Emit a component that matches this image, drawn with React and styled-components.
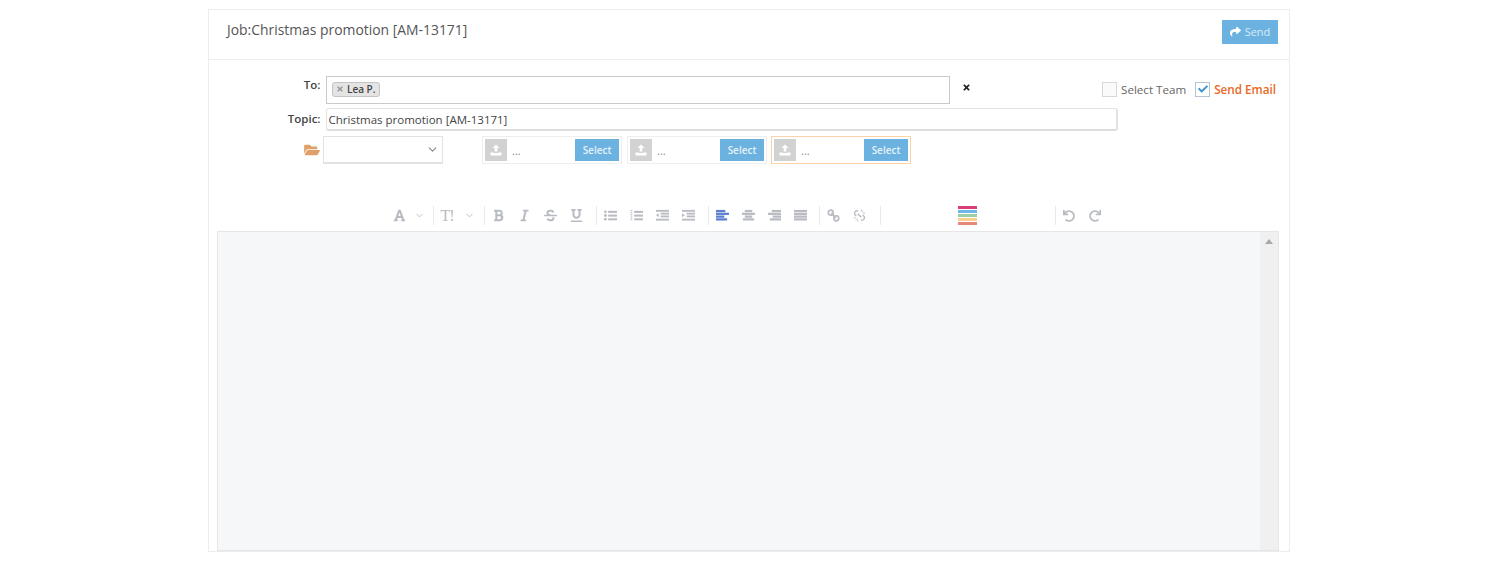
import React from "react";
import styled, { createGlobalStyle } from "styled-components";
import {
  FaFont,
  FaBold,
  FaItalic,
  FaStrikethrough,
  FaUnderline,
  FaUndo,
  FaRedo,
  FaFolderOpen,
  FaCheck,
  FaShare,
  FaTimes,
} from "react-icons/fa";
import { FiChevronDown } from "react-icons/fi";

const Global = createGlobalStyle`
  html, body {
    margin: 0;
    padding: 0;
    background: #fff;
    font-family: "Open Sans", "Liberation Sans", sans-serif;
    overflow: hidden;
  }
  * { box-sizing: border-box; }
`;

const Page = styled.div`
  height: 576px;
  padding: 9px 202px 24px 208px;
`;
const Panel = styled.div`
  height: 543px;
  border: 1px solid #ececec;
  display: flex;
  flex-direction: column;
  overflow: hidden;
`;
const Header = styled.div`
  height: 50px;
  flex: none;
  display: flex;
  justify-content: space-between;
  padding: 10px 11px 0 18px;
  border-bottom: 1px solid #efefef;
`;
const Title = styled.div`
  font-size: 13.9px;
  line-height: 20px;
  color: #555;
`;
const SendButton = styled.div`
  width: 56px;
  height: 24px;
  padding-bottom: 1px;
  background: #6cb2e0;
  color: #d8ebf7;
  font-size: 11px;
  display: flex;
  align-items: center;
  justify-content: center;
  gap: 4px;
  svg { color: #fff; width: 11px; height: 11px; }
`;
const Form = styled.div`
  padding: 16px 0 0;
  display: flex;
  flex-direction: column;
  flex: none;
`;
const Row = styled.div`
  display: flex;
  align-items: center;
  height: ${({ $h }) => $h}px;
  margin-bottom: ${({ $mb }) => $mb || 0}px;
`;
const Label = styled.div`
  width: 111.5px;
  text-align: right;
  font-size: 11.5px;
  font-weight: 600;
  color: #444;
  line-height: 18px;
  margin-right: 5px;
  align-self: flex-start;
  padding-top: ${({ $pt }) => $pt || 0}px;
`;
const ToInput = styled.div`
  width: 624px;
  height: 28px;
  border: 1px solid #c9c9c9;
  display: flex;
  align-items: center;
  padding-left: 5px;
`;
const Tag = styled.div`
  height: 15px;
  margin-top: -2px;
  padding: 0 3.5px;
  background: #e4e4e4;
  border: 1px solid #c4c4c4;
  border-radius: 3px;
  font-size: 10px;
  font-weight: 600;
  color: #444;
  display: flex;
  align-items: center;
  gap: 3px;
  svg { width: 8px; height: 8px; color: #999; }
`;
const ClearIcon = styled.div`
  margin-left: 12px;
  margin-top: -6px;
  display: flex;
  svg { width: 9px; height: 9px; color: #222; }
`;
const Options = styled.div`
  margin-left: auto;
  margin-right: 13px;
  margin-top: -2px;
  display: flex;
  align-items: center;
`;
const Box = styled.div`
  width: 15px;
  height: 15px;
  border: 1px solid ${({ $on }) => ($on ? "#b5c4d4" : "#d8d8d8")};
  background: ${({ $on }) => ($on ? "#fff" : "#fafafa")};
  margin-right: ${({ $on }) => ($on ? 4 : 4)}px;
  display: flex;
  align-items: center;
  justify-content: center;
  svg { width: 10px; height: 10px; color: #3d94d1; }
`;
const OptionText = styled.span`
  color: ${({ $on }) => ($on ? "#e8681f" : "#666")};
  font-weight: ${({ $on }) => ($on ? 600 : 400)};
  font-size: ${({ $on }) => ($on ? 11.7 : 11.6)}px;
  margin-right: ${({ $gap }) => $gap || 0}px;
`;
const TopicInput = styled.div`
  width: 792px;
  height: 23px;
  border: 1px solid #e2e2e2;
  border-bottom: 2px solid #ddd;
  border-right: 2px solid #e2e2e2;
  border-radius: 3px;
  font-size: 11.5px;
  line-height: 21px;
  padding-left: 2px;
  color: #444;
`;
const FolderIcon = styled.div`
  width: 114px;
  display: flex;
  justify-content: flex-end;
  padding-right: 3.5px;
  svg { width: 16px; height: 14px; color: #e0a06a; }
`;
const SelectBox = styled.div`
  width: 120px;
  height: 28px;
  border: 1px solid #e2e2e2;
  border-bottom: 2px solid #e2e2e2;
  display: flex;
  align-items: center;
  justify-content: flex-end;
  padding-right: 3px;
  margin-right: 39px;
  svg { width: 13px; height: 13px; color: #888; }
`;
const Upload = styled.div`
  width: 140px;
  height: 28px;
  border: 1px solid ${({ $active }) => ($active ? "#fbd3a8" : "#eee")};
  padding: 2px;
  margin-right: ${({ $mr }) => $mr || 0}px;
  display: flex;
  align-items: center;
`;
const UploadThumb = styled.div`
  width: 22px;
  height: 22px;
  background: #d2d2d2;
  display: flex;
  align-items: center;
  justify-content: center;
  svg { width: 12px; height: 12px; }
`;
const Dots = styled.div`
  flex: 1;
  font-size: 11px;
  color: #888;
  padding-left: 5px;
`;
const SelectButton = styled.div`
  width: 44px;
  height: 22px;
  background: #6cb2e0;
  color: #e4f1fa;
  font-size: 10px;
  font-weight: 600;
  display: flex;
  align-items: center;
  justify-content: center;
`;
const Toolbar = styled.div`
  margin-top: 41px;
  height: 21px;
  flex: none;
  display: flex;
  align-items: center;
  padding-left: 178px;
`;
const Tool = styled.div`
  width: ${({ $w }) => $w || 26}px;
  flex: none;
  display: flex;
  align-items: center;
  justify-content: center;
  color: ${({ $on }) => ($on ? "#5b7fd1" : "#b8bcc2")};
  svg { width: ${({ $s }) => $s || 13}px; height: ${({ $s }) => $s || 13}px; }
`;
const Sep = styled.div`
  width: 1px;
  height: 19px;
  background: #eaeaea;
  flex: none;
  margin: 0 ${({ $r }) => $r || 0}px 0 ${({ $l }) => $l || 0}px;
`;
const ColorStack = styled.div`
  width: 19px;
  height: 19px;
  flex: none;
  display: flex;
  flex-direction: column;
  justify-content: space-between;
  margin: 0 78px 0 77px;
`;
const ColorLine = styled.div`
  height: 3px;
  background: ${({ $c }) => $c};
`;
const TextSize = styled.span`
  font-family: "Liberation Serif", serif;
  font-size: 16px;
  line-height: 16px;
  letter-spacing: -1px;
  color: #b8bcc2;
`;
const Editor = styled.div`
  flex: 1;
  margin: 5px 10px 0 8px;
  background: #f6f7f9;
  border: 1px solid #e6e6e6;
  display: flex;
  justify-content: flex-end;
`;
const Scrollbar = styled.div`
  width: 18px;
  background: #f0f0f0;
  display: flex;
  justify-content: center;
  padding-top: 7px;
`;
const ScrollArrow = styled.div`
  width: 0;
  height: 0;
  border: 4px solid transparent;
  border-top: 0;
  border-bottom: 5px solid #a8a8a8;
`;

const UploadGlyph = () => (
  <svg viewBox="0 0 12 12">
    <path d="M6 .5 9.5 4H7.3v3.5H4.7V4H2.5z" fill="#fff" />
    <path d="M.5 8.5h3.2v.6h4.6v-.6h3.2v3H.5z" fill="#fff" />
  </svg>
);

// solid four bar align icons, the bars nearly touch in the reference
const barRows = {
  left: [[0, 10], [0, 14], [0, 9], [0, 12]],
  center: [[3, 8], [0, 14], [3, 8], [1, 12]],
  right: [[4, 10], [0, 14], [5, 9], [2, 12]],
  justify: [[0, 14], [0, 14], [0, 14], [0, 14]],
};
const AlignGlyph = ({ kind }) => (
  <svg viewBox="0 0 14 14" fill="currentColor">
    {barRows[kind].map(([x, w], i) => (
      <rect key={i} x={x} y={1 + i * 3} width={w} height="2.4" />
    ))}
  </svg>
);
const BulletGlyph = () => (
  <svg viewBox="0 0 14 14" fill="currentColor">
    {[2, 6, 10].map((y) => (
      <g key={y}>
        <circle cx="1.5" cy={y + 1} r="1.5" />
        <rect x="4.5" y={y} width="9.5" height="2.2" />
      </g>
    ))}
  </svg>
);
const NumberGlyph = () => (
  <svg viewBox="0 0 14 14" fill="currentColor">
    {[2, 6, 10].map((y) => (
      <g key={y}>
        <rect x="0.5" y={y - 1} width="2" height="1" />
        <rect x="0.5" y={y + 1} width="2" height="1" />
        <rect x="4.5" y={y} width="9.5" height="2.2" />
      </g>
    ))}
  </svg>
);
const IndentGlyph = ({ flip }) => (
  <svg viewBox="0 0 14 14" fill="currentColor">
    <rect x="0" y="1" width="14" height="2" />
    <rect x="5" y="4" width="9" height="2" />
    <rect x="5" y="7" width="9" height="2" />
    <rect x="0" y="10.5" width="14" height="2" />
    <path d={flip ? "M0 6.7 3 4.5v4.4z" : "M3 6.7 0 4.5v4.4z"} />
  </svg>
);
const LinkGlyph = () => (
  <svg viewBox="0 0 14 14" fill="none" stroke="currentColor" strokeWidth="1.8">
    <circle cx="4" cy="4" r="2.7" />
    <circle cx="10" cy="10" r="2.7" />
    <path d="M4.5 4.5l5 5" />
  </svg>
);
const UnlinkGlyph = () => (
  <svg viewBox="0 0 14 14" fill="none" stroke="currentColor" strokeWidth="1.5">
    <path d="M5.5 2.2A2.7 2.7 0 0 0 2 6l1.5 1.5" />
    <path d="M8.5 11.8A2.7 2.7 0 0 0 12 8l-1.5-1.5" />
    <path d="M5 5l4 4" />
    <path d="M9 .5v2M11 2l-1 1.5M13 4.5h-2M.8 9.5h2M3 12l1-1.5M5 13.5v-2" strokeWidth="1" />
  </svg>
);

const colors = ["#d63f78", "#6fb7e8", "#9ccfa4", "#f9cf90", "#e58a78"];

function Attachment({ active, mr }) {
  return (
    <Upload $active={active} $mr={mr}>
      <UploadThumb>
        <UploadGlyph />
      </UploadThumb>
      <Dots>...</Dots>
      <SelectButton>Select</SelectButton>
    </Upload>
  );
}

export default function App() {
  return (
    <>
      <Global />
      <Page>
        <Panel>
          <Header>
            <Title>Job:Christmas promotion [AM-13171]</Title>
            <SendButton>
              <FaShare />
              Send
            </SendButton>
          </Header>
          <Form>
            <Row $h={28} $mb={4}>
              <Label>To:</Label>
              <ToInput>
                <Tag>
                  <FaTimes />
                  Lea P.
                </Tag>
              </ToInput>
              <ClearIcon>
                <FaTimes />
              </ClearIcon>
              <Options>
                <Box />
                <OptionText $gap={9}>Select Team</OptionText>
                <Box $on>
                  <FaCheck />
                </Box>
                <OptionText $on>Send Email</OptionText>
              </Options>
            </Row>
            <Row $h={23} $mb={5}>
              <Label $pt={2}>Topic:</Label>
              <TopicInput>Christmas promotion [AM-13171]</TopicInput>
            </Row>
            <Row $h={28}>
              <FolderIcon>
                <FaFolderOpen />
              </FolderIcon>
              <SelectBox>
                <FiChevronDown />
              </SelectBox>
              <Attachment mr={5} />
              <Attachment mr={4} />
              <Attachment active />
            </Row>
          </Form>
          <Toolbar>
            <Tool $w={24}><FaFont /></Tool>
            <Tool $w={16} $s={11}><FiChevronDown /></Tool>
            <Sep $l={6} $r={3} />
            <Tool $w={20}><TextSize>T!</TextSize></Tool>
            <Tool $w={24} $s={11}><FiChevronDown /></Tool>
            <Sep $l={3} />
            <Tool><FaBold /></Tool>
            <Tool><FaItalic /></Tool>
            <Tool><FaStrikethrough /></Tool>
            <Tool><FaUnderline /></Tool>
            <Sep $l={7} />
            <Tool><BulletGlyph /></Tool>
            <Tool><NumberGlyph /></Tool>
            <Tool><IndentGlyph flip /></Tool>
            <Tool><IndentGlyph /></Tool>
            <Sep $l={7} />
            <Tool $on><AlignGlyph kind="left" /></Tool>
            <Tool><AlignGlyph kind="center" /></Tool>
            <Tool><AlignGlyph kind="right" /></Tool>
            <Tool><AlignGlyph kind="justify" /></Tool>
            <Sep $l={6} />
            <Tool><LinkGlyph /></Tool>
            <Tool><UnlinkGlyph /></Tool>
            <Sep $l={8} />
            <ColorStack>
              {colors.map((c) => (
                <ColorLine key={c} $c={c} />
              ))}
            </ColorStack>
            <Sep />
            <Tool $s={12}><FaUndo /></Tool>
            <Tool $s={12}><FaRedo /></Tool>
          </Toolbar>
          <Editor>
            <Scrollbar>
              <ScrollArrow />
            </Scrollbar>
          </Editor>
        </Panel>
      </Page>
    </>
  );
}
